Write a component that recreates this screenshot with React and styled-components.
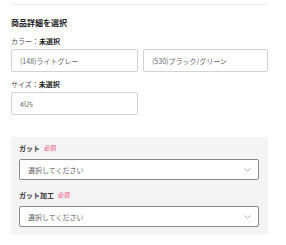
import React from 'react'
import styled, { createGlobalStyle } from 'styled-components'

const Global = createGlobalStyle`
  body {
    margin: 0;
    background: #fff;
    font-family: "Noto Sans CJK JP", "Noto Sans", sans-serif;
    color: #333;
  }
`

const Wrap = styled.div`
  width: 257px;
  padding: 4px 18px 10px 11px;
`

const Rule = styled.div`
  height: 1px;
  background: #ececec;
  margin-bottom: 12px;
`

const Heading = styled.h2`
  margin: 0 0 7px;
  font-size: 8px;
  line-height: 12px;
  font-weight: 700;
  color: #222;
`

const Label = styled.div`
  font-size: 7px;
  line-height: 10px;
  color: #555;
  margin-bottom: 3px;

  b {
    color: #222;
    font-weight: 700;
  }
`

const Row = styled.div`
  display: grid;
  grid-template-columns: ${props => props.single ? '127px' : '127px 125px'};
  gap: 5px;
  margin-bottom: ${props => props.last ? '0' : '7px'};
`

const Choice = styled.div`
  height: 21px;
  border: 1px solid #d2d2d2;
  border-radius: 2px;
  display: flex;
  align-items: center;
  padding: 0 8px;
  font-size: 7px;
  color: #666;
  background: #fff;
`

const Panel = styled.div`
  margin-top: 22px;
  background: #f4f4f4;
  padding: 6px 9px 8px 8px;
`

const FieldLabel = styled.div`
  display: flex;
  align-items: center;
  gap: 4px;
  font-size: 7px;
  line-height: 10px;
  font-weight: 700;
  color: #333;
  margin-bottom: 6px;
`

const Required = styled.span`
  font-size: 6px;
  font-weight: 400;
  color: #e5457a;
`

const Select = styled.div`
  height: 19px;
  border: 1px solid #8a8a8a;
  border-radius: 2px;
  background: #fff;
  display: flex;
  align-items: center;
  justify-content: space-between;
  padding: 0 7px 0 8px;
  font-size: 7px;
  color: #666;
  margin-bottom: ${props => props.last ? '0' : '10px'};
`

const Chevron = () => (
  <svg width="7" height="4" viewBox="0 0 7 4">
    <path d="M0.5 0.5 L3.5 3.2 L6.5 0.5" fill="none" stroke="#999" strokeWidth="0.8" />
  </svg>
)

const fields = [
  { name: 'ガット' },
  { name: 'ガット加工' },
]

export default function App() {
  return (
    <>
      <Global />
      <Wrap>
        <Rule />
        <Heading>商品詳細を選択</Heading>
        <Label>カラー：<b>未選択</b></Label>
        <Row>
          <Choice>(148)ライトグレー</Choice>
          <Choice>(530)ブラック/グリーン</Choice>
        </Row>
        <Label>サイズ：<b>未選択</b></Label>
        <Row single last>
          <Choice>4U5</Choice>
        </Row>
        <Panel>
          {fields.map((f, i) => (
            <div key={f.name}>
              <FieldLabel>{f.name}<Required>必須</Required></FieldLabel>
              <Select last={i === fields.length - 1}>
                <span>選択してください</span>
                <Chevron />
              </Select>
            </div>
          ))}
        </Panel>
      </Wrap>
    </>
  )
}
